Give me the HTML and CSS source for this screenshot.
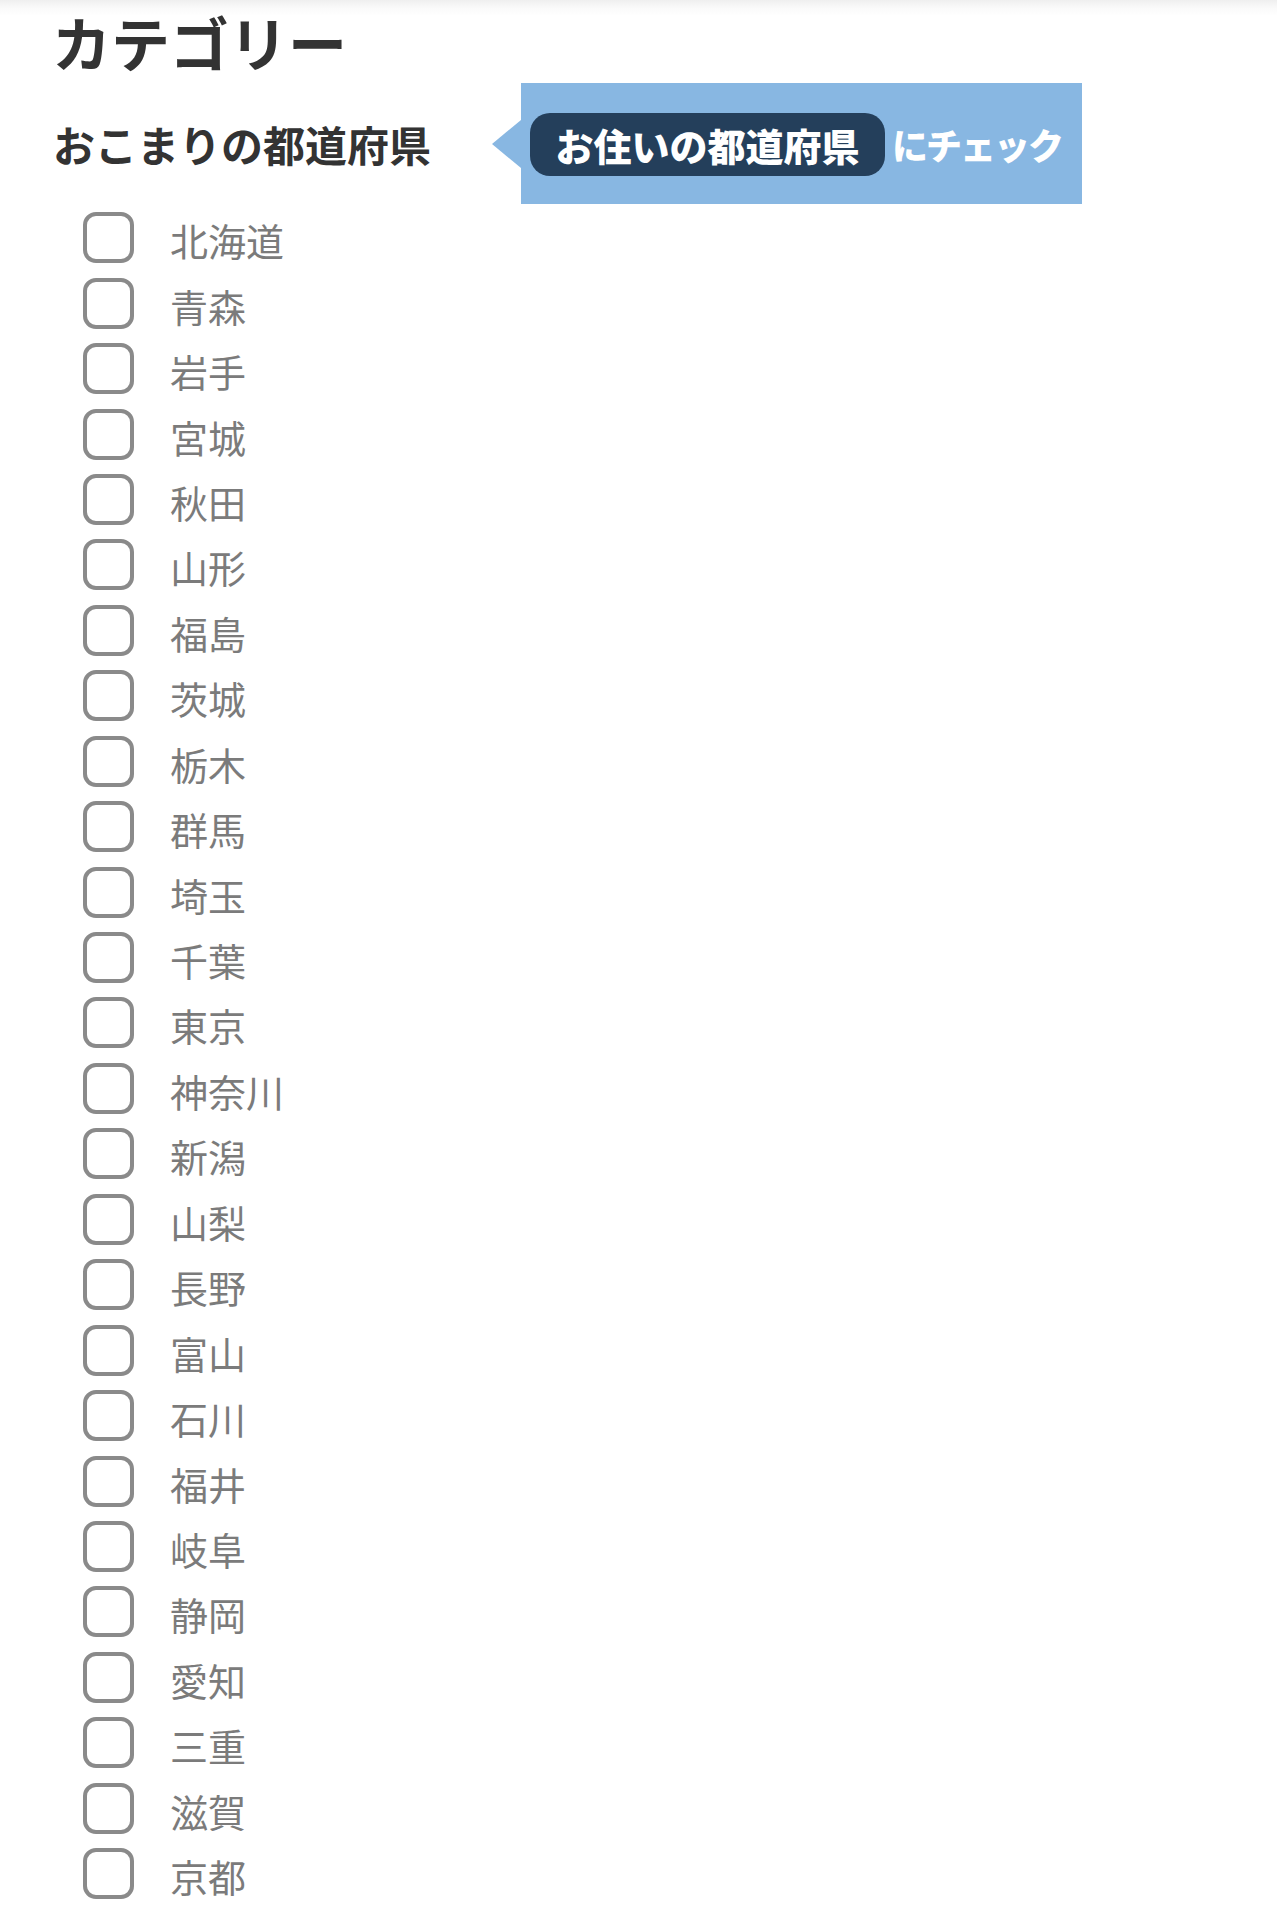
FILE: index.html
```html
<!DOCTYPE html>
<html lang="ja">
<head>
<meta charset="utf-8">
<title>カテゴリー</title>
<link rel="stylesheet" href="styles.css">
</head>
<body>
<div class="page">
  <h1 class="title">カテゴリー</h1>
  <div class="subrow">
    <h2 class="subtitle">おこまりの都道府県</h2>
    <div class="callout">
      <span class="pill">お住いの都道府県</span><span class="tail">にチェック</span>
    </div>
  </div>
  <ul class="list">
    <li class="item"><span class="box"></span><span class="label">北海道</span></li>
    <li class="item"><span class="box"></span><span class="label">青森</span></li>
    <li class="item"><span class="box"></span><span class="label">岩手</span></li>
    <li class="item"><span class="box"></span><span class="label">宮城</span></li>
    <li class="item"><span class="box"></span><span class="label">秋田</span></li>
    <li class="item"><span class="box"></span><span class="label">山形</span></li>
    <li class="item"><span class="box"></span><span class="label">福島</span></li>
    <li class="item"><span class="box"></span><span class="label">茨城</span></li>
    <li class="item"><span class="box"></span><span class="label">栃木</span></li>
    <li class="item"><span class="box"></span><span class="label">群馬</span></li>
    <li class="item"><span class="box"></span><span class="label">埼玉</span></li>
    <li class="item"><span class="box"></span><span class="label">千葉</span></li>
    <li class="item"><span class="box"></span><span class="label">東京</span></li>
    <li class="item"><span class="box"></span><span class="label">神奈川</span></li>
    <li class="item"><span class="box"></span><span class="label">新潟</span></li>
    <li class="item"><span class="box"></span><span class="label">山梨</span></li>
    <li class="item"><span class="box"></span><span class="label">長野</span></li>
    <li class="item"><span class="box"></span><span class="label">富山</span></li>
    <li class="item"><span class="box"></span><span class="label">石川</span></li>
    <li class="item"><span class="box"></span><span class="label">福井</span></li>
    <li class="item"><span class="box"></span><span class="label">岐阜</span></li>
    <li class="item"><span class="box"></span><span class="label">静岡</span></li>
    <li class="item"><span class="box"></span><span class="label">愛知</span></li>
    <li class="item"><span class="box"></span><span class="label">三重</span></li>
    <li class="item"><span class="box"></span><span class="label">滋賀</span></li>
    <li class="item"><span class="box"></span><span class="label">京都</span></li>
  </ul>
</div>
</body>
</html>
```

FILE: styles.css
```css
html, body {
  margin: 0;
  padding: 0;
}
body {
  background: linear-gradient(#efefef 0, #fafafa 8px, #ffffff 16px) no-repeat;
  background-size: 100% 16px;
  background-color: #ffffff;
  font-family: "Noto Sans CJK JP", "Noto Sans", sans-serif;
  color: #333333;
}
.page {
  padding: 8px 0 0 53px;
}
.title {
  margin: 0 0 0 -1px;
  font-size: 59px;
  line-height: 68px;
  font-weight: 700;
  color: #333333;
  letter-spacing: 0;
}
.subrow {
  display: flex;
  align-items: center;
  margin-top: 7px;
}
.subtitle {
  margin: 0;
  font-size: 42px;
  line-height: 50px;
  font-weight: 700;
  color: #333333;
  width: 378px;
  white-space: nowrap;
}
.callout {
  position: relative;
  margin-left: 90px;
  width: 561px;
  height: 121px;
  box-sizing: border-box;
  background: #88b7e2;
  display: flex;
  align-items: center;
  padding-left: 9px;
}
.callout::before {
  content: "";
  position: absolute;
  left: -29px;
  top: 37px;
  border-style: solid;
  border-width: 24px 29px 24px 0;
  border-color: transparent #88b7e2 transparent transparent;
}
.pill {
  display: inline-flex;
  align-items: center;
  justify-content: center;
  width: 355px;
  height: 63px;
  box-sizing: border-box;
  background: #243f5b;
  border-radius: 20px;
  color: #ffffff;
  font-size: 38px;
  font-weight: 900;
  letter-spacing: 0;
  white-space: nowrap;
  margin-top: 2px;
}
.tail {
  margin-left: 7px;
  color: #ffffff;
  font-size: 36px;
  font-weight: 900;
  letter-spacing: -2px;
  white-space: nowrap;
}
.list {
  list-style: none;
  margin: 1px 0 0 0;
  padding: 0 0 0 30px;
}
.item {
  display: flex;
  align-items: center;
  height: 65.44px;
}
.box {
  flex: none;
  width: 51px;
  height: 51px;
  box-sizing: border-box;
  border: 4.5px solid #8a8a8a;
  border-radius: 13px;
}
.label {
  margin-left: 36px;
  font-size: 38px;
  line-height: 44px;
  font-weight: 400;
  color: #7b7b7b;
  padding-top: 5px;
}
```
